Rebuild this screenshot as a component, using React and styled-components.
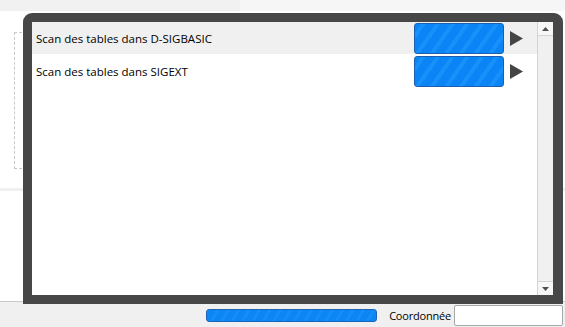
import React from 'react';
import styled, { createGlobalStyle } from 'styled-components';

const GlobalStyle = createGlobalStyle`
    html, body {
        margin: 0;
        padding: 0;
        background: #ffffff;
    }
    body {
        font-family: "Open Sans", "Noto Sans", sans-serif;
        font-size: 12px;
        color: #000;
    }
    * {
        box-sizing: border-box;
    }
`;

const tasks = [
    { label: 'Scan des tables dans D-SIGBASIC', active: true },
    { label: 'Scan des tables dans SIGEXT', active: false },
];

const App = () => {
    return (
        <>
            <GlobalStyle />
            <Window>
                <Workspace>
                    <TopStrip />
                    <Canvas>
                        <DashedPanel />
                    </Canvas>
                    <Separator />
                    <Filler />
                </Workspace>

                <StatusBar>
                    <StatusProgress />
                    <StatusLabel>Coordonnée</StatusLabel>
                    <CoordInput />
                </StatusBar>

                <Dialog>
                    <DialogInner>
                        <TaskList>
                            {tasks.map((t) => (
                                <TaskRow key={t.label} $active={t.active}>
                                    <TaskLabel>{t.label}</TaskLabel>
                                    <TaskProgress />
                                    <PlayButton>
                                        <svg width="13" height="15" viewBox="0 0 13 15">
                                            <polygon points="0,0 13,7.5 0,15" fill="#454545" />
                                        </svg>
                                    </PlayButton>
                                </TaskRow>
                            ))}
                        </TaskList>
                        <ScrollBar>
                            <ScrollArrow>
                                <svg width="7" height="4" viewBox="0 0 7 4">
                                    <polygon points="3.5,0 7,4 0,4" fill="#505050" />
                                </svg>
                            </ScrollArrow>
                            <ScrollTrack />
                            <ScrollArrow $bottom>
                                <svg width="7" height="4" viewBox="0 0 7 4">
                                    <polygon points="0,0 7,0 3.5,4" fill="#505050" />
                                </svg>
                            </ScrollArrow>
                        </ScrollBar>
                    </DialogInner>
                </Dialog>
            </Window>
        </>
    );
};

export default App;

const Window = styled.div`
    position: relative;
    width: 565px;
    height: 327px;
    display: flex;
    flex-direction: column;
    overflow: hidden;
    background: #ffffff;
`;

const Workspace = styled.div`
    flex: 1;
    display: flex;
    flex-direction: column;
`;

const TopStrip = styled.div`
    height: 11px;
    background: linear-gradient(to right, #f1f1f1 0, #f1f1f1 240px, #f6f6f6 240px);
`;

const Canvas = styled.div`
    height: 177px;
    padding: 21px 0 0 14px;
    background: #ffffff;
`;

const DashedPanel = styled.div`
    width: 300px;
    height: 137px;
    border-left: 1px dashed #c8c8c8;
    border-top: 1px dashed #c8c8c8;
    border-bottom: 1px dashed #c8c8c8;
`;

const Separator = styled.div`
    height: 3px;
    background: #f0f0f0;
`;

const Filler = styled.div`
    flex: 1;
    background: #ffffff;
`;

const StatusBar = styled.div`
    height: 26px;
    display: flex;
    align-items: center;
    justify-content: flex-end;
    padding: 0 2px 0 0;
    background: #f0f0f0;
    border-top: 1px solid #c9c9c9;
`;

const StatusProgress = styled.div`
    width: 171px;
    height: 13px;
    border-radius: 3px;
    border: 1px solid #1b64b8;
    background: repeating-linear-gradient(
        -60deg,
        #0c86f4 0,
        #0c86f4 6px,
        #168cf7 6px,
        #168cf7 9px
    );
    margin-right: 12px;
    margin-top: 2px;
`;

const StatusLabel = styled.span`
    font-size: 11px;
    letter-spacing: -0.2px;
    color: #000;
    margin-right: 3px;
    margin-top: 1px;
`;

const CoordInput = styled.div`
    width: 109px;
    height: 21px;
    background: #ffffff;
    border: 1px solid #a8a8a8;
    border-radius: 2px;
    margin-top: 2px;
`;

const Dialog = styled.div`
    position: absolute;
    left: 23px;
    top: 13px;
    width: 540px;
    height: 291px;
    padding: 9px 10px 9px 9px;
    background: #474747;
    border-radius: 9px 9px 0 0;
`;

const DialogInner = styled.div`
    width: 100%;
    height: 100%;
    display: flex;
    background: #ffffff;
`;

const TaskList = styled.div`
    flex: 1;
    display: flex;
    flex-direction: column;
    gap: 1px;
`;

const TaskRow = styled.div`
    height: 32px;
    display: flex;
    align-items: center;
    padding-left: 4px;
    background: ${({ $active }) => ($active ? '#f0f0f0' : '#ffffff')};
`;

const TaskLabel = styled.span`
    flex: 1;
    font-size: 11.5px;
    color: #000;
`;

const TaskProgress = styled.div`
    width: 90px;
    height: 31px;
    margin-left: 1px;
    border-radius: 3px;
    border: 1px solid #1b5fae;
    background: repeating-linear-gradient(
        -55deg,
        #0b85f5 0,
        #0b85f5 8px,
        #1890f9 8px,
        #1890f9 12px
    );
`;

const PlayButton = styled.div`
    width: 33px;
    display: flex;
    align-items: center;
    justify-content: center;
    padding-right: 8px;
`;

const ScrollBar = styled.div`
    width: 16px;
    display: flex;
    flex-direction: column;
    background: #f3f3f3;
    border-left: 1px solid #d4d4d4;
`;

const ScrollArrow = styled.div`
    height: 14px;
    display: flex;
    align-items: center;
    justify-content: center;
    background: #f7f7f7;
    border-bottom: ${({ $bottom }) => ($bottom ? 'none' : '1px solid #d4d4d4')};
    border-top: ${({ $bottom }) => ($bottom ? '1px solid #d4d4d4' : 'none')};
`;

const ScrollTrack = styled.div`
    flex: 1;
    background: #f0f0f0;
`;
